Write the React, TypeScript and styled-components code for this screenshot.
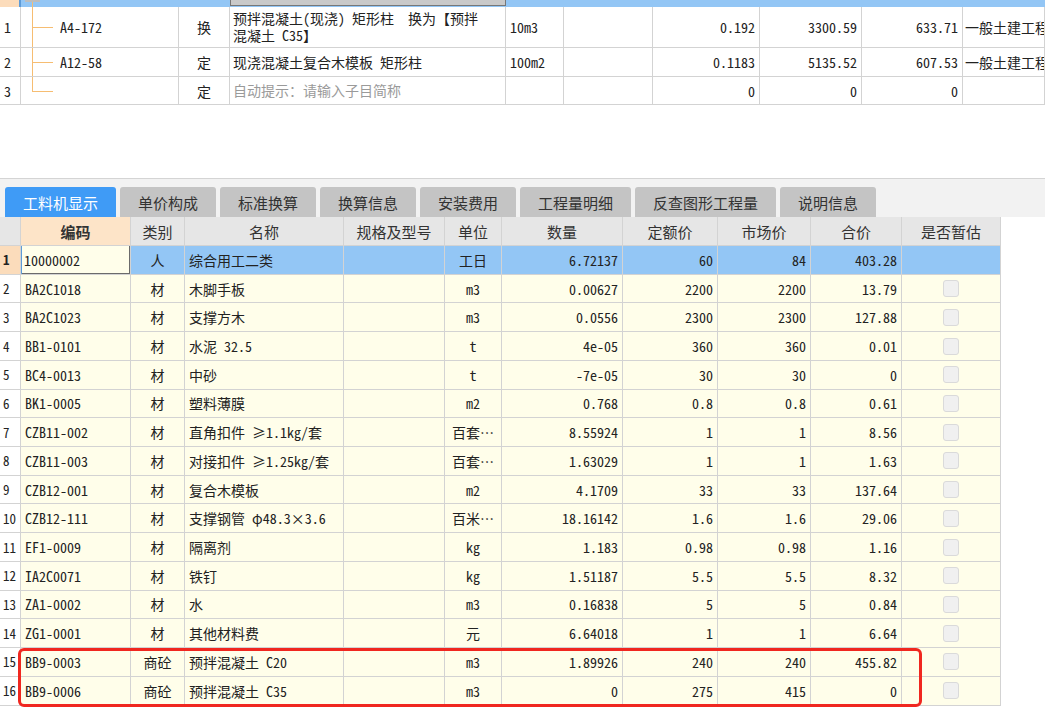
import React from "react";
import styled, { createGlobalStyle, css } from "styled-components";

const FONT = `"Noto Sans Mono CJK SC", "Noto Sans CJK SC", "Liberation Sans", sans-serif`;
const LINE = "#d3d3d3";
const TOP_COLS = "21px 158px 51px 276px 58px 89px 107px 102px 101px 1fr";
const MAT_COLS = "21px 110px 54px 159px 101px 57px 121px 95px 93px 91px 99px";

interface Material {
  code: string;
  kind: string;
  name: string;
  unit: string;
  qty: string;
  base: string;
  market: string;
  total: string;
}

const materials: Material[] = [
  { code: "10000002", kind: "人", name: "综合用工二类", unit: "工日", qty: "6.72137", base: "60", market: "84", total: "403.28" },
  { code: "BA2C1018", kind: "材", name: "木脚手板", unit: "m3", qty: "0.00627", base: "2200", market: "2200", total: "13.79" },
  { code: "BA2C1023", kind: "材", name: "支撑方木", unit: "m3", qty: "0.0556", base: "2300", market: "2300", total: "127.88" },
  { code: "BB1-0101", kind: "材", name: "水泥 32.5", unit: "t", qty: "4e-05", base: "360", market: "360", total: "0.01" },
  { code: "BC4-0013", kind: "材", name: "中砂", unit: "t", qty: "-7e-05", base: "30", market: "30", total: "0" },
  { code: "BK1-0005", kind: "材", name: "塑料薄膜", unit: "m2", qty: "0.768", base: "0.8", market: "0.8", total: "0.61" },
  { code: "CZB11-002", kind: "材", name: "直角扣件 ≥1.1kg/套", unit: "百套…", qty: "8.55924", base: "1", market: "1", total: "8.56" },
  { code: "CZB11-003", kind: "材", name: "对接扣件 ≥1.25kg/套", unit: "百套…", qty: "1.63029", base: "1", market: "1", total: "1.63" },
  { code: "CZB12-001", kind: "材", name: "复合木模板", unit: "m2", qty: "4.1709", base: "33", market: "33", total: "137.64" },
  { code: "CZB12-111", kind: "材", name: "支撑钢管 φ48.3×3.6", unit: "百米…", qty: "18.16142", base: "1.6", market: "1.6", total: "29.06" },
  { code: "EF1-0009", kind: "材", name: "隔离剂", unit: "kg", qty: "1.183", base: "0.98", market: "0.98", total: "1.16" },
  { code: "IA2C0071", kind: "材", name: "铁钉", unit: "kg", qty: "1.51187", base: "5.5", market: "5.5", total: "8.32" },
  { code: "ZA1-0002", kind: "材", name: "水", unit: "m3", qty: "0.16838", base: "5", market: "5", total: "0.84" },
  { code: "ZG1-0001", kind: "材", name: "其他材料费", unit: "元", qty: "6.64018", base: "1", market: "1", total: "6.64" },
  { code: "BB9-0003", kind: "商砼", name: "预拌混凝土 C20", unit: "m3", qty: "1.89926", base: "240", market: "240", total: "455.82" },
  { code: "BB9-0006", kind: "商砼", name: "预拌混凝土 C35", unit: "m3", qty: "0", base: "275", market: "415", total: "0" },
];

const tabs = ["工料机显示", "单价构成", "标准换算", "换算信息", "安装费用", "工程量明细", "反查图形工程量", "说明信息"];
const heads = ["编码", "类别", "名称", "规格及型号", "单位", "数量", "定额价", "市场价", "合价", "是否暂估"];

const GlobalStyle = createGlobalStyle`
  html, body { margin: 0; padding: 0; background: #fff; }
  body { font-family: ${FONT}; color: #222; overflow: hidden; }
`;

const Page = styled.div`
  width: 1045px;
  height: 710px;
  display: flex;
  flex-direction: column;
  overflow: hidden;
`;

// ---- upper grid (定额子目) ----
const TopTable = styled.div`
  display: flex;
  flex-direction: column;
`;

const TopRow = styled.div<{ $h: number; $stub?: boolean }>`
  display: grid;
  grid-template-columns: ${TOP_COLS};
  height: ${(p) => p.$h}px;
  background: ${(p) => (p.$stub ? "#93c6f5" : "#fff")};
`;

type Align = "left" | "center" | "right";

const cellBase = css<{ $align?: Align }>`
  box-sizing: border-box;
  display: flex;
  align-items: center;
  justify-content: ${(p) => (p.$align === "right" ? "flex-end" : p.$align === "center" ? "center" : "flex-start")};
  padding: 0 4px;
  border-right: 1px solid ${LINE};
  border-bottom: 1px solid ${LINE};
  font-size: 14px;
  white-space: nowrap;
  overflow: hidden;
`;

const TopCell = styled.div<{ $align?: Align; $muted?: boolean }>`
  ${cellBase};
  color: ${(p) => (p.$muted ? "#9a9a9a" : "#222")};
`;

const NameCell = styled(TopCell)`
  white-space: normal;
  line-height: 17px;
  padding-left: 3px;
`;

const StubNum = styled.div`
  background: #fcdcbb;
  border-right: 2px solid #5d9bd8;
`;

const StubEdit = styled.div`
  box-sizing: border-box;
  background: #c9c9c9;
  border: 1px solid #777;
  border-top: none;
  height: 6px;
`;

const TreeCell = styled(TopCell)<{ $last?: boolean }>`
  position: relative;
  padding-left: 39px;

  &::before {
    content: "";
    position: absolute;
    left: 11px;
    top: 0;
    width: 1px;
    height: ${(p) => (p.$last ? "50%" : "100%")};
    background: #f6bd72;
  }
  &::after {
    content: "";
    position: absolute;
    left: 11px;
    top: 50%;
    width: 21px;
    height: 1px;
    background: #f6bd72;
  }
`;

const StubTree = styled.div`
  position: relative;
  &::before {
    content: "";
    position: absolute;
    left: 4px;
    top: 0;
    width: 15px;
    height: 2px;
    background: #bdbdbd;
  }
  &::after {
    content: "";
    position: absolute;
    left: 11px;
    top: 2px;
    width: 1px;
    bottom: 0;
    background: #f6bd72;
  }
`;

const Gap = styled.div`
  height: 73px;
  background: #fff;
`;

// ---- tabs ----
const TabBar = styled.div`
  display: flex;
  gap: 4px;
  padding: 8px 0 0 5px;
  background: #f2f2f2;
  border-top: 1px solid #d4d4d4;
`;

const Tab = styled.div<{ $active?: boolean }>`
  height: 30px;
  padding: 0 18px;
  display: flex;
  align-items: center;
  font-size: 15px;
  border-radius: 3px 3px 0 0;
  background: ${(p) => (p.$active ? "#3f9bf6" : "#c4c4c4")};
  color: ${(p) => (p.$active ? "#fff" : "#333")};
`;

// ---- material grid ----
const MatTable = styled.div`
  position: relative;
  display: flex;
  flex-direction: column;
`;

const MatRow = styled.div<{ $h: number }>`
  display: grid;
  grid-template-columns: ${MAT_COLS};
  height: ${(p) => p.$h}px;
  flex-shrink: 0;
`;

const HeadCell = styled.div<{ $key?: boolean }>`
  ${cellBase};
  justify-content: center;
  font-size: 15px;
  color: #333;
  background: ${(p) => (p.$key ? "#fde4c8" : "#e6e6e6")};
  font-weight: ${(p) => (p.$key ? 700 : 400)};
`;

const NumCell = styled.div<{ $active?: boolean }>`
  ${cellBase};
  padding: 0 3px;
  font-size: 13px;
  background: ${(p) => (p.$active ? "#fbdcbb" : "#fff")};
  font-weight: ${(p) => (p.$active ? 700 : 400)};
`;

const MatCell = styled.div<{ $align?: Align; $selected?: boolean }>`
  ${cellBase};
  background: ${(p) => (p.$selected ? "#93c6f5" : "#fffeea")};
`;

const EditCell = styled(MatCell)`
  padding-left: 3px;
  background: #fffeea;
  box-shadow: inset 1px 0 0 #5d9bd8, inset -1px -1px 0 #6b6b6b;
`;

const Check = styled.span`
  box-sizing: border-box;
  width: 16px;
  height: 17px;
  border-radius: 3px;
  border: 1px solid #dadada;
  background: #f0f0f0;
`;

const Highlight = styled.div`
  position: absolute;
  left: 18px;
  top: 431px;
  width: 904px;
  height: 59px;
  box-sizing: border-box;
  border: 3px solid #f0271f;
  border-radius: 6px;
  pointer-events: none;
`;

function QuotaGrid() {
  return (
    <TopTable>
      <TopRow $h={7} $stub>
        <StubNum />
        <StubTree />
        <div />
        <StubEdit />
      </TopRow>
      <TopRow $h={41}>
        <TopCell>1</TopCell>
        <TreeCell>A4-172</TreeCell>
        <TopCell $align="center">换</TopCell>
        <NameCell>
          预拌混凝土(现浇) 矩形柱&nbsp;&nbsp;换为【预拌
          <br />
          混凝土 C35】
        </NameCell>
        <TopCell>10m3</TopCell>
        <TopCell />
        <TopCell $align="right">0.192</TopCell>
        <TopCell $align="right">3300.59</TopCell>
        <TopCell $align="right">633.71</TopCell>
        <TopCell style={{ paddingLeft: 2 }}>一般土建工程</TopCell>
      </TopRow>
      <TopRow $h={29}>
        <TopCell>2</TopCell>
        <TreeCell>A12-58</TreeCell>
        <TopCell $align="center">定</TopCell>
        <NameCell>现浇混凝土复合木模板 矩形柱</NameCell>
        <TopCell>100m2</TopCell>
        <TopCell />
        <TopCell $align="right">0.1183</TopCell>
        <TopCell $align="right">5135.52</TopCell>
        <TopCell $align="right">607.53</TopCell>
        <TopCell style={{ paddingLeft: 2 }}>一般土建工程</TopCell>
      </TopRow>
      <TopRow $h={28}>
        <TopCell>3</TopCell>
        <TreeCell $last />
        <TopCell $align="center">定</TopCell>
        <NameCell $muted>自动提示：请输入子目简称</NameCell>
        <TopCell />
        <TopCell />
        <TopCell $align="right">0</TopCell>
        <TopCell $align="right">0</TopCell>
        <TopCell $align="right">0</TopCell>
        <TopCell />
      </TopRow>
    </TopTable>
  );
}

function MaterialGrid() {
  return (
    <MatTable>
      <MatRow $h={29}>
        <HeadCell />
        {heads.map((h, i) => (
          <HeadCell key={h} $key={i === 0}>
            {h}
          </HeadCell>
        ))}
      </MatRow>
      {materials.map((m, i) => {
        const sel = i === 0;
        return (
          <MatRow key={m.code} $h={28.72}>
            <NumCell $active={sel}>{i + 1}</NumCell>
            {sel ? <EditCell>{m.code}</EditCell> : <MatCell>{m.code}</MatCell>}
            <MatCell $align="center" $selected={sel}>{m.kind}</MatCell>
            <MatCell $selected={sel}>{m.name}</MatCell>
            <MatCell $selected={sel} />
            <MatCell $align="center" $selected={sel}>{m.unit}</MatCell>
            <MatCell $align="right" $selected={sel}>{m.qty}</MatCell>
            <MatCell $align="right" $selected={sel}>{m.base}</MatCell>
            <MatCell $align="right" $selected={sel}>{m.market}</MatCell>
            <MatCell $align="right" $selected={sel}>{m.total}</MatCell>
            <MatCell $align="center" $selected={sel}>{!sel && <Check />}</MatCell>
          </MatRow>
        );
      })}
      <Highlight />
    </MatTable>
  );
}

export default function App() {
  return (
    <Page>
      <GlobalStyle />
      <QuotaGrid />
      <Gap />
      <TabBar>
        {tabs.map((t, i) => (
          <Tab key={t} $active={i === 0}>
            {t}
          </Tab>
        ))}
      </TabBar>
      <MaterialGrid />
    </Page>
  );
}
